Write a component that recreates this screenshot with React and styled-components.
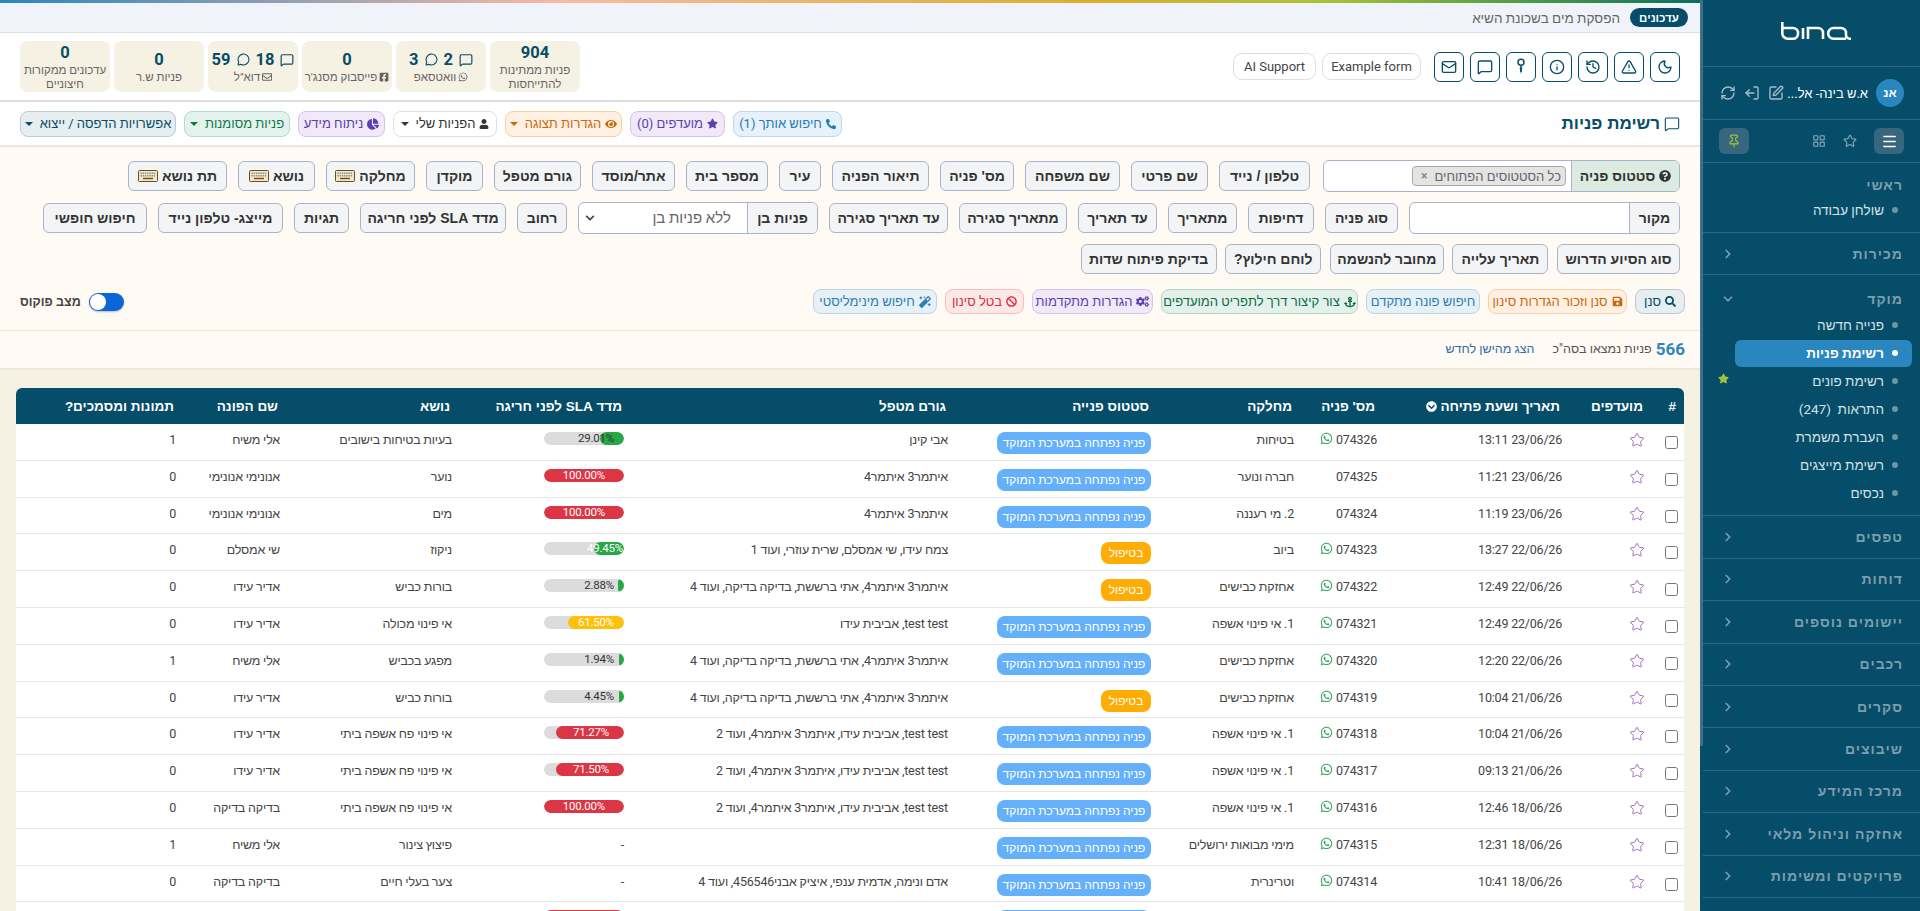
import React from 'react';
import styled, { createGlobalStyle } from 'styled-components';
import {
  Moon, TriangleAlert, History, Info, Mail, MessageSquare, Star, RefreshCw, LogOut, SquarePen,
  Menu, LayoutGrid, Pin, ChevronRight, ChevronDown, MessageCircle,
} from 'lucide-react';
import {
  FaWhatsapp, FaFacebookSquare, FaRegEnvelope, FaQuestionCircle, FaUser, FaChartPie, FaEye, FaStar,
  FaPhoneAlt, FaSearch, FaSave, FaAnchor, FaCogs, FaBan, FaMagic, FaChevronCircleDown, FaChevronDown,
} from 'react-icons/fa';

const NAVY = '#054d68';
const FONT = 'Roboto, "Liberation Sans", sans-serif';

const Global = createGlobalStyle`
  html, body { margin: 0; padding: 0; height: 100%; overflow: hidden; }
  body { font-family: ${FONT}; background: #f5f1e3; color: #333; }
  #root { height: 100%; }
  * { box-sizing: border-box; }
`;

const Page = styled.div`
  direction: rtl;
  display: flex;
  height: 911px;
  overflow: hidden;
`;

/* ---------- Sidebar ---------- */
const Sidebar = styled.aside`
  position: relative;
  flex: 0 0 220px;
  width: 220px;
  background: ${NAVY};
  padding-left: 3px;
  color: #d6e1e7;
`;
const ScrollThumb = styled.div`
  position: absolute;
  left: 0;
  top: 0;
  width: 3px;
  height: 746px;
  background: #3f7187;
`;
const SideBlock = styled.div`
  height: ${p => p.$h}px;
  border-bottom: 1px solid rgba(255, 255, 255, 0.16);
  display: flex;
  align-items: center;
`;
const LogoBlock = styled(SideBlock)`
  justify-content: center;
  padding-left: 8px;
  padding-bottom: 4px;
`;
const UserBlock = styled(SideBlock)`
  padding: 0 16px 0 17px;
`;
const Avatar = styled.div`
  width: 28px;
  height: 28px;
  border-radius: 50%;
  background: #2a86bf;
  color: #fff;
  font: bold 12px ${FONT};
  display: flex;
  align-items: center;
  justify-content: center;
  margin-left: 8px;
`;
const UserName = styled.div`
  flex: 1;
  color: #fff;
  font-size: 13px;
`;
const UserIcons = styled.div`
  display: flex;
  gap: 8px;
  color: #a9bfcb;
  align-items: center;
`;
const ToolBlock = styled(SideBlock)`
  padding: 0 16px;
  justify-content: space-between;
`;
const ToolGroup = styled.div`
  display: flex;
  align-items: center;
  gap: 17px;
  color: #86a5b5;
`;
const ToolBtn = styled.div`
  width: 30px;
  height: 26px;
  border-radius: 6px;
  background: #36677f;
  display: flex;
  align-items: center;
  justify-content: center;
  color: ${p => p.$c || '#fff'};
`;
const ClosedSection = styled.div`
  border-bottom: 1px solid rgba(255, 255, 255, 0.16);
  height: 42.4px;
  display: flex;
  align-items: center;
`;
const OpenSection = styled.div`
  border-bottom: 1px solid rgba(255, 255, 255, 0.16);
  height: ${p => p.$h}px;
  padding-top: ${p => p.$pt}px;
`;
const SectionHead = styled.div`
  display: flex;
  justify-content: space-between;
  align-items: center;
  flex: 1;
  height: 16px;
  padding: 0 17px 0 18px;
  font: bold 14px "Liberation Sans", sans-serif;
  letter-spacing: 1px;
  color: #7d9dae;
`;
const OpenHead = styled(SectionHead)`
  margin-bottom: ${p => p.$mb}px;
`;
const NavItem = styled.div`
  position: relative;
  display: flex;
  align-items: center;
  height: 28px;
  padding-right: 22px;
  font-size: 13.5px;
  font-weight: ${p => (p.$active ? 700 : 400)};
  color: ${p => (p.$active ? '#fff' : '#d6e1e7')};
`;
const NavActive = styled.div`
  position: absolute;
  top: 1px;
  bottom: 0;
  right: 8px;
  left: 32px;
  background: #2a86bf;
  border-radius: 6px;
`;
const NavDot = styled.span`
  position: relative;
  width: 6px;
  height: 6px;
  border-radius: 50%;
  background: ${p => (p.$active ? '#fff' : '#6f93a6')};
  margin-left: 8px;
`;
const NavLabel = styled.span`
  position: relative;
  white-space: pre;
`;
const NavStar = styled.span`
  position: absolute;
  left: 15px;
  top: 6px;
  color: #a3c43a;
  display: flex;
`;

const Logo = () => (
  <svg width="70" height="18" viewBox="0 0 70 18" fill="none" stroke="#fff" strokeWidth="2.6">
    <path d="M1.3 0V11a5.5 5.5 0 0 0 5.5 5.7H12a5 5 0 0 0 5-5V11a5 5 0 0 0-5-5H1.3" />
    <path d="M22 6V17" />
    <path d="M27 17V6H37a5 5 0 0 1 5 5V17" />
    <path d="M52.5 6H60a5 5 0 0 1 5 5V13a3.7 3.7 0 0 0 3.7 3.7H70M65 16.7H52.5a5.35 5.35 0 0 1 0-10.7" />
  </svg>
);

const closedSections = ['טפסים', 'דוחות', 'יישומים נוספים', 'רכבים', 'סקרים', 'שיבוצים', 'מרכז המידע', 'אחזקה וניהול מלאי', 'פרויקטים ומשימות'];
const centerItems = [
  { t: 'פנייה חדשה' },
  { t: 'רשימת פניות', active: true },
  { t: 'רשימת פונים', star: true },
  { t: 'התראות  (247)' },
  { t: 'העברת משמרת' },
  { t: 'רשימת מייצגים' },
  { t: 'נכסים' },
];

const Nav = ({ t, active, star }) => (
  <NavItem $active={active}>
    {active && <NavActive />}
    <NavDot $active={active} />
    <NavLabel>{t}</NavLabel>
    {star && <NavStar><FaStar size={11} /></NavStar>}
  </NavItem>
);

const SidebarPanel = () => (
  <Sidebar>
    <ScrollThumb />
    <LogoBlock $h={67}><Logo /></LogoBlock>
    <UserBlock $h={53}>
      <Avatar>אנ</Avatar>
      <UserName>א.ש בינה- אל...</UserName>
      <UserIcons>
        <SquarePen size={16} />
        <LogOut size={16} style={{ transform: 'scaleX(-1)' }} />
        <RefreshCw size={16} />
      </UserIcons>
    </UserBlock>
    <ToolBlock $h={43}>
      <ToolGroup>
        <ToolBtn><Menu size={17} /></ToolBtn>
        <Star size={14} />
        <LayoutGrid size={14} />
      </ToolGroup>
      <ToolBtn $c="#a3c43a"><Pin size={14} /></ToolBtn>
    </ToolBlock>
    <OpenSection $h={70} $pt={14}>
      <OpenHead $mb={3}>ראשי</OpenHead>
      <Nav t="שולחן עבודה" />
    </OpenSection>
    <ClosedSection>
      <SectionHead>מכירות<ChevronRight size={14} strokeWidth={3} /></SectionHead>
    </ClosedSection>
    <OpenSection $h={241} $pt={16}>
      <OpenHead $mb={4}>מוקד<ChevronDown size={14} strokeWidth={3} /></OpenHead>
      {centerItems.map(i => <Nav key={i.t} {...i} />)}
    </OpenSection>
    {closedSections.map(s => (
      <ClosedSection key={s}>
        <SectionHead>{s}<ChevronRight size={14} strokeWidth={3} /></SectionHead>
      </ClosedSection>
    ))}
  </Sidebar>
);

/* ---------- Main ---------- */
const Main = styled.main`
  flex: 1;
  min-width: 0;
  height: 911px;
  overflow: hidden;
  background: #f5f1e3;
`;
const TopStrip = styled.div`
  height: 3px;
  background: linear-gradient(to right, #2a86bf 0%, #f9b9a3 33%, #dcae2c 64%, #a9c234 78%, #4c9a48 90%, #0b6e5e 100%);
`;
const UpdateBar = styled.div`
  height: 30px;
  background: #f0f4fa;
  border-bottom: 1px solid #dedede;
  display: flex;
  align-items: center;
  padding-right: 12px;
  gap: 10px;
`;
const UpdatePill = styled.span`
  width: 58px;
  height: 19px;
  border-radius: 10px;
  background: ${NAVY};
  color: #fff;
  font: bold 11.5px "Liberation Sans", sans-serif;
  display: flex;
  align-items: center;
  justify-content: center;
`;
const UpdateText = styled.span`
  font-size: 13.5px;
  color: #666;
`;
const HeaderBar = styled.header`
  height: 69px;
  background: #fff;
  border-bottom: 2px solid #e0e0e0;
  display: flex;
  align-items: center;
  padding: 0 20px;
`;
const IconBox = styled.div`
  width: 30px;
  height: 30px;
  border: 1.5px solid ${NAVY};
  border-radius: 6px;
  color: ${NAVY};
  display: flex;
  align-items: center;
  justify-content: center;
`;
const IconRow = styled.div`
  display: flex;
  gap: 6px;
  margin-left: 13px;
`;
const PillLink = styled.div`
  width: ${p => p.$w}px;
  height: 27px;
  margin-left: 6px;
  border: 1px solid #dedede;
  border-radius: 9px;
  background: #fff;
  color: #444;
  font-size: 13px;
  display: flex;
  align-items: center;
  justify-content: center;
`;
const StatRow = styled.div`
  margin-right: auto;
  display: flex;
  gap: 4px;
`;
const StatCard = styled.div`
  width: 90px;
  height: 51px;
  background: #f5f1e3;
  border-radius: 8px;
  display: flex;
  flex-direction: column;
  align-items: center;
  justify-content: center;
  text-align: center;
`;
const StatNum = styled.div`
  display: flex;
  align-items: center;
  gap: 6px;
  font: bold 16.5px/20px Roboto, sans-serif;
  color: ${NAVY};
`;
const StatLabel = styled.div`
  font-size: 11.5px;
  line-height: 14px;
  color: #666;
  display: flex;
  align-items: center;
  justify-content: center;
  gap: 2px;
  padding: 0 2px;
  white-space: ${p => (p.$wrap ? 'normal' : 'nowrap')};
`;
const TitleBar = styled.div`
  height: 43px;
  background: #fff;
  display: flex;
  align-items: center;
  justify-content: space-between;
  padding: 0 20px;
`;
const Title = styled.h1`
  margin: 0;
  display: flex;
  align-items: center;
  gap: 4px;
  font: bold 17px "Liberation Sans", sans-serif;
  color: ${NAVY};
`;
const ChipRow = styled.div`
  display: flex;
  gap: 8px;
`;
const tones = {
  blue: ['#e7f1fa', '#bcd8ea', '#1f7ab8'],
  purple: ['#efe9f8', '#d3c4ef', '#5b3fb0'],
  orange: ['#fff0e2', '#f9cfa3', '#c96a10'],
  white: ['#fff', '#e0e0e0', '#333'],
  green: ['#e3f2ec', '#b6dcc8', '#0d7a4a'],
  slate: ['#e6eef0', '#b9ccd4', NAVY],
  sky: ['#e6f0f5', '#b9d6e6', '#2a7fb5'],
  red: ['#fde8e8', '#f8bcbc', '#d9303f'],
  mint: ['#e4f1ea', '#b3d8c4', '#0c6b4a'],
};
const Chip = styled.div`
  width: ${p => p.$w}px;
  height: ${p => p.$h || 26}px;
  display: flex;
  align-items: center;
  justify-content: center;
  gap: 4px;
  border-radius: 8px;
  font-size: 13px;
  white-space: nowrap;
  border: 1px solid ${p => tones[p.$tone][1]};
  background: ${p => tones[p.$tone][0]};
  color: ${p => tones[p.$tone][2]};
`;
const Caret = styled.span`
  width: 0;
  height: 0;
  margin-right: 3px;
  border-left: 4px solid transparent;
  border-right: 4px solid transparent;
  border-top: 4px solid currentColor;
`;

const FilterPanel = styled.section`
  background: #fffaf4;
  border-top: 2px solid #ece8df;
  border-bottom: 1px solid #ece8df;
  height: 186px;
  padding-top: 13px;
`;
const FilterRow = styled.div`
  display: flex;
  align-items: center;
  height: ${p => p.$h || 32}px;
  gap: ${p => p.$gap || 11}px;
  padding-right: 20px;
  margin-bottom: ${p => (p.$last ? 0 : 10)}px;
`;
const FilterBtn = styled.div`
  flex: none;
  width: ${p => p.$w}px;
  height: 30px;
  display: flex;
  align-items: center;
  justify-content: center;
  gap: 4px;
  white-space: nowrap;
  background: #f3f4f6;
  border: 1px solid #a9b3c9;
  border-radius: 6px;
  font: bold 14px "Liberation Sans", sans-serif;
  color: #333;
`;
const FieldGroup = styled.div`
  flex: none;
  width: ${p => p.$w}px;
  height: 32px;
  display: flex;
  background: #fff;
  border: 1px solid #a9b3c9;
  border-radius: 6px;
  overflow: hidden;
  margin-left: ${p => p.$ml || 0}px;
`;
const FieldLabel = styled.div`
  width: ${p => p.$w}px;
  flex: none;
  display: flex;
  align-items: center;
  justify-content: center;
  gap: 4px;
  background: ${p => p.$bg || '#f3f4f6'};
  border-left: 1px solid #a9b3c9;
  font: bold 14px "Liberation Sans", sans-serif;
  color: #333;
`;
const FieldBody = styled.div`
  flex: 1;
  display: flex;
  align-items: center;
  padding: 0 5px;
  color: #666;
  font-size: 15px;
`;
const SelectBody = styled(FieldBody)`
  justify-content: space-between;
  padding: 0 16px 0 6px;
`;
const Tag = styled.div`
  width: 154px;
  height: 20px;
  display: flex;
  align-items: center;
  justify-content: space-between;
  padding: 0 4px 0 8px;
  background: #e4e4e4;
  border: 1px solid #aaa;
  border-radius: 4px;
  color: #666;
  font-size: 13px;
`;
const TagX = styled.span`
  color: #888;
  font-weight: 700;
  font-size: 12px;
`;
const ActionRow = styled.div`
  display: flex;
  align-items: center;
  gap: 8px;
  height: 25px;
  margin-top: 15px;
  padding: 0 15px 0 20px;
`;
const FocusToggle = styled.div`
  margin-right: auto;
  display: flex;
  align-items: center;
  gap: 8px;
  font: bold 12.5px "Liberation Sans", sans-serif;
  color: #444;
`;
const ToggleTrack = styled.div`
  position: relative;
  width: 35px;
  height: 18px;
  border-radius: 9px;
  background: #0a66d8;
  box-shadow: 0 1px 2px rgba(0, 0, 0, 0.25);
`;
const ToggleKnob = styled.div`
  position: absolute;
  left: 1px;
  top: 1px;
  width: 16px;
  height: 16px;
  border-radius: 50%;
  background: #fff;
`;
const SummaryBar = styled.div`
  height: 39px;
  background: #fffaf4;
  border-bottom: 2px solid #ece8df;
  display: flex;
  align-items: center;
  gap: 18px;
  padding: 0 15px 2px;
`;
const Count = styled.span`
  display: flex;
  align-items: center;
  gap: 4px;
  font-size: 12.5px;
  color: #555;
`;
const CountNum = styled.b`
  font: bold 17px Roboto, sans-serif;
  color: #2e86c1;
`;
const SortLink = styled.span`
  font-size: 12.5px;
  color: #2b6ea8;
`;

/* ---------- Table ---------- */
const COLS = '33px 83px 185px 83px 143px 203px 324px 172px 172px 104px 166px';
const TableWrap = styled.div`
  margin: 18px 16px 0;
  background: #fff;
  border-radius: 6px 6px 0 0;
  overflow: hidden;
`;
const HeadRow = styled.div`
  display: grid;
  grid-template-columns: ${COLS};
  height: 36px;
  align-items: center;
  background: ${NAVY};
  color: #fff;
  font: bold 13.5px "Liberation Sans", sans-serif;
`;
const HeadCell = styled.div`
  padding-right: 8px;
  display: flex;
  align-items: center;
  gap: 3px;
  white-space: nowrap;
`;
const DataRow = styled.div`
  display: grid;
  grid-template-columns: ${COLS};
  height: 36.8px;
  border-bottom: 1px solid #e6e6e6;
  font-size: 12.5px;
  letter-spacing: -0.2px;
  color: #444;
  overflow: hidden;
`;
const Cell = styled.div`
  padding: 8px 6px 0 0;
  line-height: 16px;
  white-space: nowrap;
  overflow: hidden;
  display: flex;
  align-items: flex-start;
  gap: 3px;
`;
const CheckCell = styled(Cell)`
  padding-top: 12px;
`;
const StarCell = styled(Cell)`
  color: #a66cc8;
`;
const Check = styled.input`
  margin: 0;
  width: 13px;
  height: 13px;
`;
const Badge = styled.span`
  display: inline-flex;
  align-items: center;
  justify-content: center;
  height: 22px;
  width: ${p => (p.$hold ? 50 : 154)}px;
  background: ${p => (p.$hold ? '#ffad05' : '#64b0fb')};
  color: #fff;
  border-radius: 8px;
  font-size: 12px;
  letter-spacing: 0;
`;
const Bar = styled.div`
  position: relative;
  width: 80px;
  height: 13px;
  border-radius: 7px;
  background: #dcdcdc;
  overflow: hidden;
`;
const BarFill = styled.div`
  position: absolute;
  top: 0;
  bottom: 0;
  right: 0;
  border-radius: 7px;
  background: ${p => p.$c};
`;
const BarText = styled.div`
  position: absolute;
  top: 0;
  font: 11.5px/13px Roboto, sans-serif;
  color: ${p => p.$c};
  direction: ltr;
`;

const OPEN = 'פניה נפתחה במערכת המוקד';
const HOLD = 'בטיפול';
const ITAMAR = 'איתמר3 איתמר4';
const LONG4 = 'איתמר3 איתמר4, אתי ברששת, בדיקה בדיקה, ועוד 4';
const TEST2 = 'test test, אביבית עידו, איתמר3 איתמר4, ועוד 2';
const GREEN = '#28a745', RED = '#dc3545', YEL = '#ffc107';

const rows = [
  ['074326', 1, '23/06/26 13:11', 'בטיחות', OPEN, 'אבי קינן', ['29.01%', 24, GREEN, 10, '#333'], 'בעיות בטיחות בישובים', 'אלי משיח', 1],
  ['074325', 0, '23/06/26 11:21', 'חברה ונוער', OPEN, ITAMAR, ['100.00%', 80, RED, 19, '#fff'], 'נוער', 'אנונימי אנונימי', 0],
  ['074324', 0, '23/06/26 11:19', '2. מי רעננה', OPEN, ITAMAR, ['100.00%', 80, RED, 19, '#fff'], 'מים', 'אנונימי אנונימי', 0],
  ['074323', 1, '22/06/26 13:27', 'ביוב', HOLD, 'צמח עידו, שי אמסלם, שרית עוזרי, ועוד 1', ['49.45%', 30, GREEN, 1, '#fff'], 'ניקוז', 'שי אמסלם', 0],
  ['074322', 1, '22/06/26 12:49', 'אחזקת כבישים', HOLD, LONG4, ['2.88%', 6, GREEN, 10, '#333'], 'בורות כביש', 'אדיר עידו', 0],
  ['074321', 1, '22/06/26 12:49', '1. אי פינוי אשפה', OPEN, 'test test, אביבית עידו', ['61.50%', 56, YEL, 10, '#fff'], 'אי פינוי מכולה', 'אדיר עידו', 0],
  ['074320', 1, '22/06/26 12:20', 'אחזקת כבישים', OPEN, LONG4, ['1.94%', 5, GREEN, 10, '#333'], 'מפגע בכביש', 'אלי משיח', 1],
  ['074319', 1, '21/06/26 10:04', 'אחזקת כבישים', HOLD, LONG4, ['4.45%', 5, GREEN, 10, '#333'], 'בורות כביש', 'אדיר עידו', 0],
  ['074318', 1, '21/06/26 10:04', '1. אי פינוי אשפה', OPEN, TEST2, ['71.27%', 68, RED, 15, '#fff'], 'אי פינוי פח אשפה ביתי', 'אדיר עידו', 0],
  ['074317', 1, '21/06/26 09:13', '1. אי פינוי אשפה', OPEN, TEST2, ['71.50%', 68, RED, 15, '#fff'], 'אי פינוי פח אשפה ביתי', 'אדיר עידו', 0],
  ['074316', 1, '18/06/26 12:46', '1. אי פינוי אשפה', OPEN, TEST2, ['100.00%', 80, RED, 19, '#fff'], 'אי פינוי פח אשפה ביתי', 'בדיקה בדיקה', 0],
  ['074315', 1, '18/06/26 12:31', 'מימי מבואות ירושלים', OPEN, '', null, 'פיצוץ צינור', 'אלי משיח', 1],
  ['074314', 1, '18/06/26 10:41', 'וטרינרית', OPEN, 'אדם ונימה, אדמית ענפי, איציק אבני456546, ועוד 4', null, 'צער בעלי חיים', 'בדיקה בדיקה', 0],
  ['', 0, '', '', '', '', ['', 80, RED, 19, '#fff'], '', '', ''],
];

const SlaBar = ({ v }) => (
  <Bar>
    <BarFill $c={v[2]} style={{ width: v[1] }} />
    <BarText $c={v[4]} style={{ right: v[3] }}>{v[0]}</BarText>
  </Bar>
);

const KeyboardIcon = () => (
  <svg width="20" height="12" viewBox="0 0 20 12">
    <rect x="0.5" y="0.5" width="19" height="11" rx="1" fill="#f3e7c8" stroke="#6b4a1e" />
    <path d="M2.5 3.2h15M2.5 5.8h15" stroke="#8a8a8a" strokeDasharray="1.4 .8" strokeWidth="1.4" />
    <path d="M5 8.5h10" stroke="#6b4a1e" strokeWidth="1.4" />
  </svg>
);

const PinKey = () => (
  <svg width="16" height="18" viewBox="0 0 16 18" fill="none" stroke="currentColor" strokeWidth="1.5">
    <circle cx="8" cy="4.2" r="3" />
    <path d="M8 7.2V14" />
    <path d="M6.6 9.5h2.8L8 16z" fill="currentColor" stroke="none" />
  </svg>
);

const row1 = [['טלפון / נייד', 91], ['שם פרטי', 77], ['שם משפחה', 95], ["מס' פניה", 74], ['תיאור הפניה', 97], ['עיר', 42], ['מספר בית', 82], ['אתר/מוסד', 83], ['גורם מטפל', 87], ['מוקדן', 57], ['מחלקה', 89, 1], ['נושא', 77, 1], ['תת נושא', 99, 1]];
const row2a = [['סוג פניה', 73], ['דחיפות', 66], ['מתאריך', 69], ['עד תאריך', 79], ['מתאריך סגירה', 108], ['עד תאריך סגירה', 119]];
const row2b = [['רחוב', 50], ['מדד SLA לפני חריגה', 146], ['תגיות', 55], ['מייצג- טלפון נייד', 125], ['חיפוש חופשי', 104]];
const row3 = [['סוג הסיוע הדרוש', 123], ['תאריך עלייה', 96], ['מחובר להנשמה', 114], ['לוחם חילוץ?', 96], ['בדיקת פיתוח שדות', 136]];

const Btn = ({ t, w, kb }) => (
  <FilterBtn $w={w}>{t}{kb && <KeyboardIcon />}</FilterBtn>
);

const App = () => (
  <>
    <Global />
    <Page>
      <SidebarPanel />
      <Main>
        <TopStrip />
        <UpdateBar>
          <UpdatePill>עדכונים</UpdatePill>
          <UpdateText>הפסקת מים בשכונת השיא</UpdateText>
        </UpdateBar>
        <HeaderBar>
          <IconRow>
            <IconBox><Moon size={16} /></IconBox>
            <IconBox><TriangleAlert size={16} /></IconBox>
            <IconBox><History size={16} /></IconBox>
            <IconBox><Info size={16} /></IconBox>
            <IconBox><PinKey /></IconBox>
            <IconBox><MessageSquare size={16} /></IconBox>
            <IconBox><Mail size={16} /></IconBox>
          </IconRow>
          <PillLink $w={99}>Example form</PillLink>
          <PillLink $w={83}>AI Support</PillLink>
          <StatRow>
            <StatCard>
              <StatNum>904</StatNum>
              <StatLabel $wrap>פניות ממתינות להתייחסות</StatLabel>
            </StatCard>
            <StatCard>
              <StatNum><MessageSquare size={14} />2<MessageCircle size={13} />3</StatNum>
              <StatLabel><FaWhatsapp size={10} />וואטסאפ</StatLabel>
            </StatCard>
            <StatCard>
              <StatNum>0</StatNum>
              <StatLabel><FaFacebookSquare size={10} />פייסבוק מסנג'ר</StatLabel>
            </StatCard>
            <StatCard>
              <StatNum><MessageSquare size={14} />18<MessageCircle size={13} />59</StatNum>
              <StatLabel><FaRegEnvelope size={10} />דוא"ל</StatLabel>
            </StatCard>
            <StatCard>
              <StatNum>0</StatNum>
              <StatLabel>פניות ש.ר</StatLabel>
            </StatCard>
            <StatCard>
              <StatNum>0</StatNum>
              <StatLabel $wrap>עדכונים ממקורות חיצוניים</StatLabel>
            </StatCard>
          </StatRow>
        </HeaderBar>
        <TitleBar>
          <Title><MessageSquare size={16} strokeWidth={1.6} />רשימת פניות</Title>
          <ChipRow>
            <Chip $w={109} $tone="blue"><FaPhoneAlt size={10} />חיפוש אותך (1)</Chip>
            <Chip $w={95} $tone="purple"><FaStar size={11} />מועדפים (0)</Chip>
            <Chip $w={117} $tone="orange"><FaEye size={12} />הגדרות תצוגה<Caret /></Chip>
            <Chip $w={104} $tone="white"><FaUser size={10} />הפניות שלי<Caret /></Chip>
            <Chip $w={87} $tone="purple"><FaChartPie size={12} />ניתוח מידע</Chip>
            <Chip $w={106} $tone="green">פניות מסומנות<Caret /></Chip>
            <Chip $w={156} $tone="slate">אפשרויות הדפסה / ייצוא<Caret /></Chip>
          </ChipRow>
        </TitleBar>
        <FilterPanel>
          <FilterRow>
            <FieldGroup $w={357} $ml={2}>
              <FieldLabel $w={108} $bg="#dcebe2"><FaQuestionCircle size={12} />סטטוס פניה</FieldLabel>
              <FieldBody><Tag>כל הסטטוסים הפתוחים<TagX>×</TagX></Tag></FieldBody>
            </FieldGroup>
            {row1.map(([t, w, kb]) => <Btn key={t} t={t} w={w} kb={kb} />)}
          </FilterRow>
          <FilterRow>
            <FieldGroup $w={271}>
              <FieldLabel $w={50}>מקור</FieldLabel>
              <FieldBody />
            </FieldGroup>
            {row2a.map(([t, w]) => <Btn key={t} t={t} w={w} />)}
            <FieldGroup $w={240}>
              <FieldLabel $w={70}>פניות בן</FieldLabel>
              <SelectBody>ללא פניות בן<FaChevronDown size={10} color="#444" /></SelectBody>
            </FieldGroup>
            {row2b.map(([t, w]) => <Btn key={t} t={t} w={w} />)}
          </FilterRow>
          <FilterRow $h={30} $gap={8.6} $last>
            {row3.map(([t, w]) => <Btn key={t} t={t} w={w} />)}
          </FilterRow>
          <ActionRow>
            <Chip $w={50} $h={25} $tone="slate"><FaSearch size={11} />סנן</Chip>
            <Chip $w={139} $h={25} $tone="orange"><FaSave size={11} />סנן וזכור הגדרות סינון</Chip>
            <Chip $w={114} $h={25} $tone="sky">חיפוש פונה מתקדם</Chip>
            <Chip $w={197} $h={25} $tone="mint"><FaAnchor size={12} />צור קיצור דרך לתפריט המועדפים</Chip>
            <Chip $w={121} $h={25} $tone="purple"><FaCogs size={13} />הגדרות מתקדמות</Chip>
            <Chip $w={79} $h={25} $tone="red"><FaBan size={11} />בטל סינון</Chip>
            <Chip $w={124} $h={25} $tone="sky"><FaMagic size={12} />חיפוש מינימליסטי</Chip>
            <FocusToggle>
              <ToggleTrack><ToggleKnob /></ToggleTrack>
              מצב פוקוס
            </FocusToggle>
          </ActionRow>
        </FilterPanel>
        <SummaryBar>
          <Count><CountNum>566</CountNum>פניות נמצאו בסה"כ</Count>
          <SortLink>הצג מהישן לחדש</SortLink>
        </SummaryBar>
        <TableWrap>
          <HeadRow>
            <HeadCell>#</HeadCell>
            <HeadCell>מועדפים</HeadCell>
            <HeadCell>תאריך ושעת פתיחה<FaChevronCircleDown size={11} /></HeadCell>
            <HeadCell>מס' פניה</HeadCell>
            <HeadCell>מחלקה</HeadCell>
            <HeadCell>סטטוס פנייה</HeadCell>
            <HeadCell>גורם מטפל</HeadCell>
            <HeadCell>מדד SLA לפני חריגה</HeadCell>
            <HeadCell>נושא</HeadCell>
            <HeadCell>שם הפונה</HeadCell>
            <HeadCell>תמונות ומסמכים?</HeadCell>
          </HeadRow>
          {rows.map((r, i) => (
            <DataRow key={i}>
              <CheckCell><Check type="checkbox" readOnly /></CheckCell>
              <StarCell><Star size={16} strokeWidth={1.5} /></StarCell>
              <Cell>{r[2]}</Cell>
              <Cell>{r[0]}{r[1] === 1 && <FaWhatsapp size={13} color="#2e9e5b" />}</Cell>
              <Cell>{r[3]}</Cell>
              <Cell><Badge $hold={r[4] === HOLD}>{r[4]}</Badge></Cell>
              <Cell>{r[5]}</Cell>
              <Cell>{r[6] ? <SlaBar v={r[6]} /> : '-'}</Cell>
              <Cell>{r[7]}</Cell>
              <Cell>{r[8]}</Cell>
              <Cell>{r[9]}</Cell>
            </DataRow>
          ))}
        </TableWrap>
      </Main>
    </Page>
  </>
);

export default App;
